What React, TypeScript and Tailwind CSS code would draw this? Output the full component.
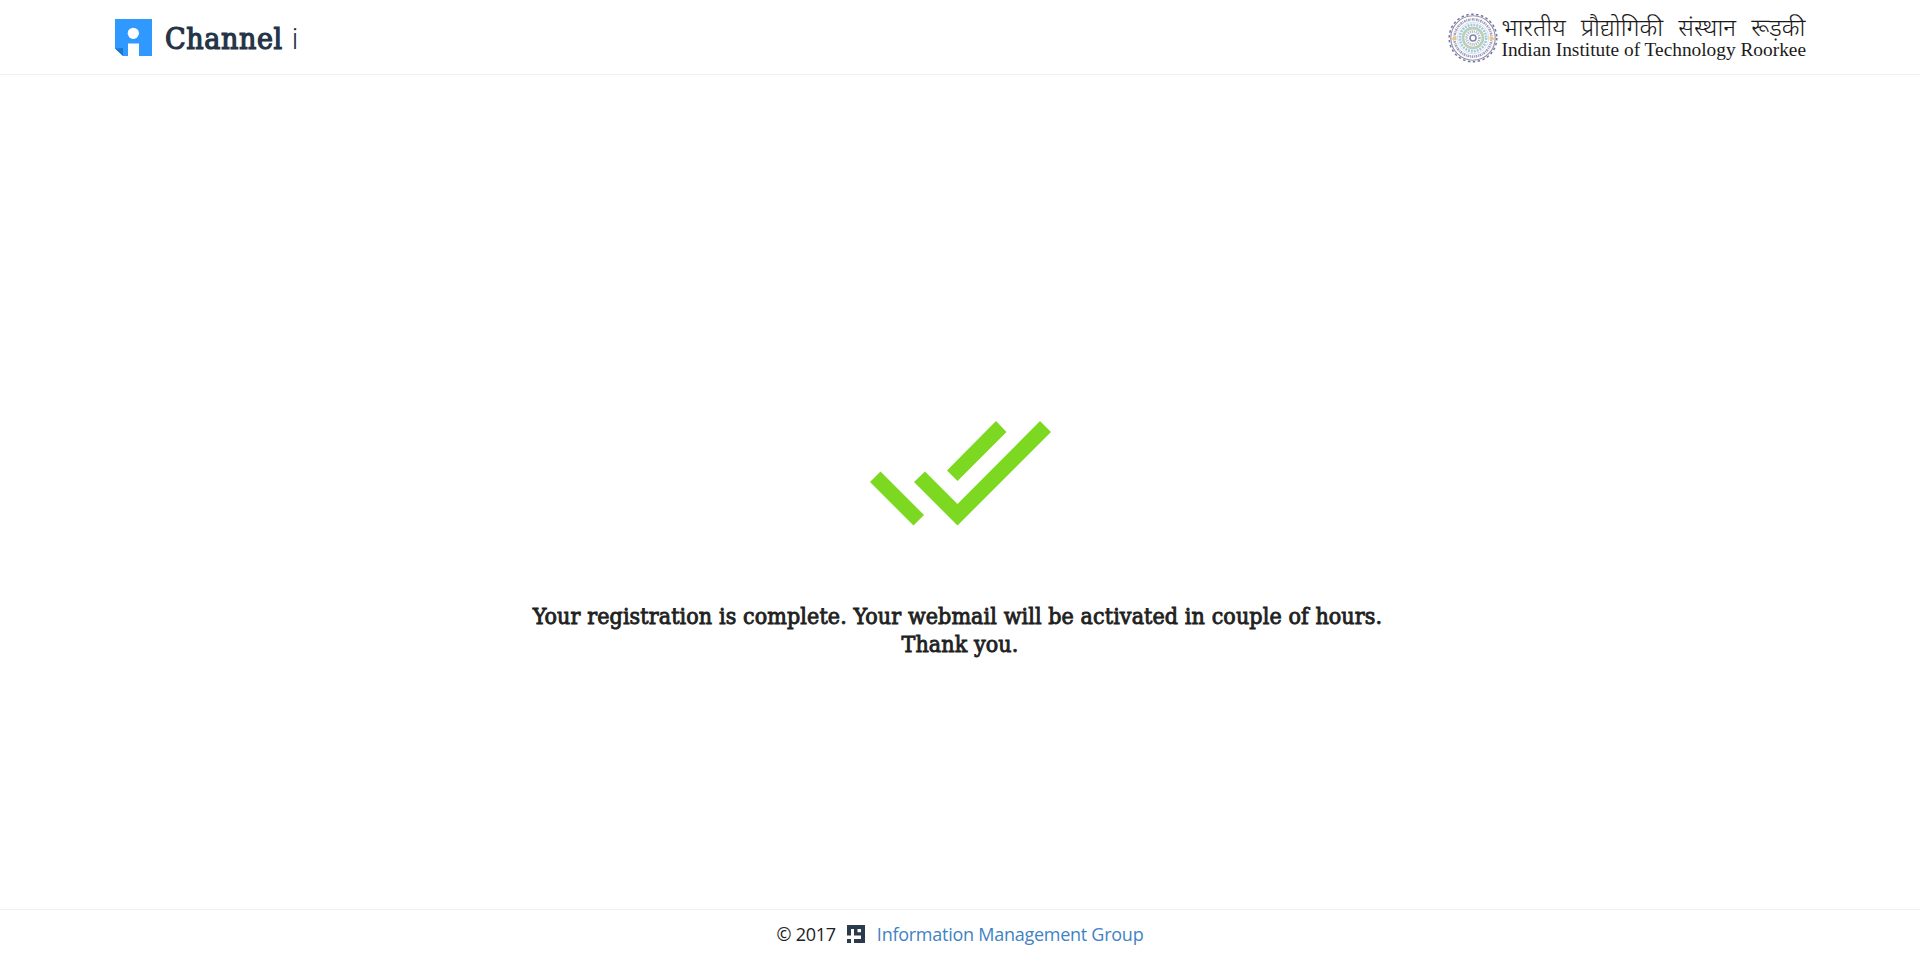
import React from "react";

const slab = "font-['Roboto_Slab','DejaVu_Serif_Condensed','DejaVu_Serif',serif]";

function ChannelLogo() {
  return (
    <svg viewBox="0 0 37 37" className="h-[37px] w-[37px]">
      <path d="M0 0H37V37H8L0 29.5Z" fill="#2f99ff" />
      <path d="M0 29.5L8 29V37Z" fill="#1878d0" />
      <circle cx="18.3" cy="14.3" r="5.6" fill="#fff" />
      <path d="M13 24.5H24V37H13Z" fill="#fff" />
    </svg>
  );
}

function Seal() {
  return (
    <svg viewBox="0 0 50 50" className="mt-[1px] h-[50px] w-[50px] shrink-0" fill="none">
      <circle cx="25" cy="25" r="23.8" stroke="#77779c" strokeWidth="1.5" strokeDasharray="2.5 2.48" />
      <circle cx="25" cy="25" r="22.2" stroke="#9090b0" strokeWidth="1.1" />
      <circle cx="25" cy="25" r="18.6" stroke="#a0a0ba" strokeWidth="2.6" strokeDasharray="1.7 0.7 0.9 0.8" />
      <circle cx="25" cy="25" r="15.8" stroke="#c4c4d4" strokeWidth="0.6" />
      <circle cx="25" cy="25" r="13.2" stroke="#9ccbe6" strokeWidth="2.6" strokeDasharray="2 0.96" />
      <circle cx="25" cy="25" r="10" stroke="#c0ceb6" strokeWidth="2.8" />
      <circle cx="25" cy="25" r="6.5" stroke="#a9bdd2" strokeWidth="2.6" strokeDasharray="1.2 0.84" />
      <circle cx="25" cy="25" r="3" stroke="#8484a6" strokeWidth="1.6" />
      <path d="M3 25.5L8.5 23V26.8H3ZM47 25.5L41.5 23V26.8H47Z" fill="#efc583" />
    </svg>
  );
}

function GroupLogo() {
  return (
    <svg viewBox="0 0 18 18" className="ml-[11px] h-[18px] w-[18px]" fill="#2b3a4c">
      <path d="M0 0H18V18H7V14H14V10.5H7V4H4V10.5H0ZM10.5 4V7.3H14V4Z" fillRule="evenodd" />
      <path d="M0 14H4V18H0Z" />
    </svg>
  );
}

export default function App() {
  return (
    <div className="flex h-[960px] w-full flex-col overflow-hidden bg-white">
      <header className="flex h-[75px] shrink-0 items-center justify-between border-b border-[#efefef] pr-[114px] pl-[115px]">
        <div className="flex items-center">
          <ChannelLogo />
          <div className={`ml-[13px] flex items-baseline pt-[3px] text-[#243447] ${slab}`}>
            <span className="text-[30px] leading-[40px] font-normal tracking-[0.6px] [-webkit-text-stroke:1.2px_#243447]">Channel</span>
            <span className="ml-[9px] font-[Roboto,sans-serif] text-[29px] leading-[40px] font-light">i</span>
          </div>
        </div>
        <div className="flex items-center gap-[4px]">
          <Seal />
          <div className="flex flex-col pt-[1px] text-[#1b1b1b]">
            <span className="font-['Noto_Sans_Devanagari','Noto_Sans',sans-serif] text-[24.4px] leading-[27px] font-light whitespace-nowrap [word-spacing:1.2px]">भारतीय&nbsp; प्रौद्योगिकी&nbsp; संस्थान&nbsp; रूड़की</span>
            <span className="-mt-[4px] font-['Liberation_Serif',serif] text-[19.35px] leading-[19px] whitespace-nowrap">Indian Institute of Technology Roorkee</span>
          </div>
        </div>
      </header>
      <main className="flex flex-1 flex-col items-center pt-[346px]">
        <svg viewBox="870 421 181 105" className="h-[105px] w-[181px]" fill="#7cd820">
          <path d="M880.5 471.5L870 482L913.5 525.5L924 515Z" />
          <path d="M925 471.5L914 482L957.5 525.5L1051 432L1040 421L957.5 504Z" />
          <path d="M996 421L1006.5 432L957.5 481L947 470.5Z" />
        </svg>
        <div className={`mt-[76px] text-center text-[23px] leading-[28px] font-normal tracking-[0.1px] text-[#212121] [-webkit-text-stroke:0.85px_#212121] ${slab}`}>
          <p className="pr-[5px]">Your registration is complete. Your webmail will be activated in couple of hours.</p>
          <p>Thank you.</p>
        </div>
      </main>
      <footer className="flex h-[51px] shrink-0 items-center justify-center border-t border-[#efefef] pb-[2px] font-['Open_Sans',sans-serif] text-[18px] tracking-[-0.26px]">
        <span className="text-[#212121]">© 2017</span>
        <GroupLogo />
        <a className="ml-[12px] text-[#4183c4]">Information Management Group</a>
      </footer>
    </div>
  );
}
